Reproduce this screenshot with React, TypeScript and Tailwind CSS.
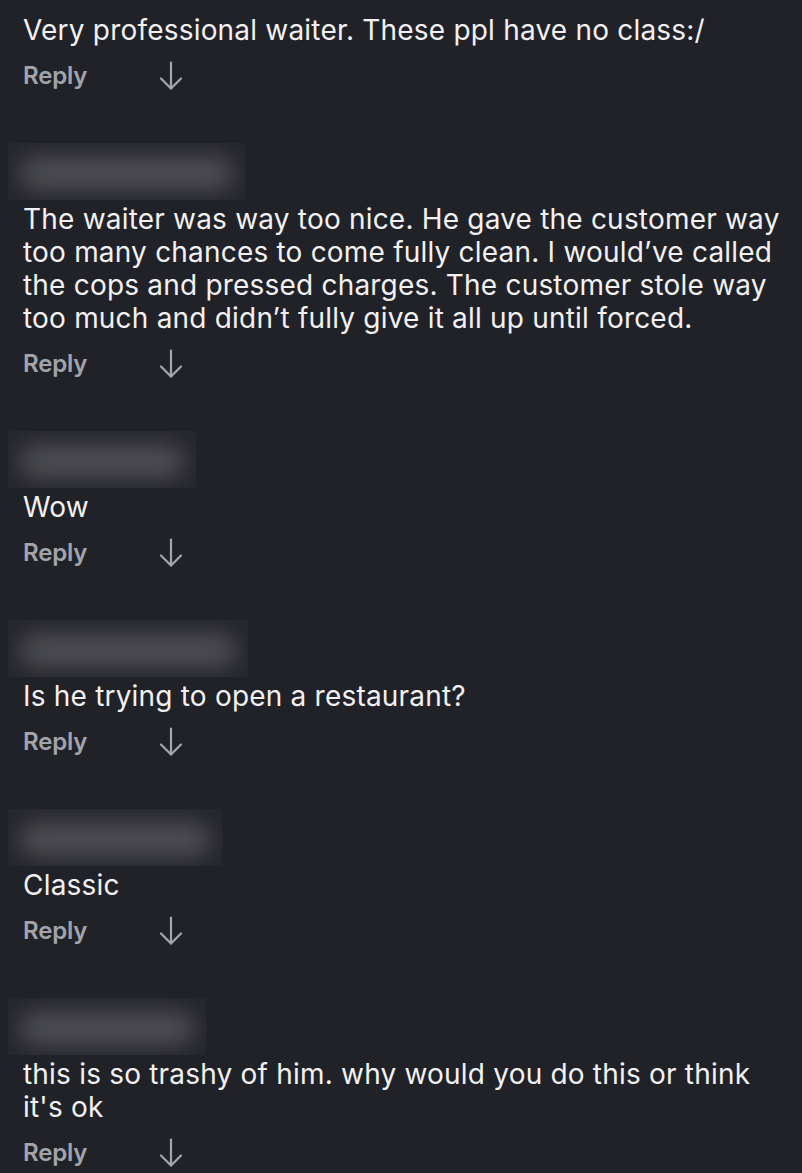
import React from "react";

function Arrow() {
  return (
    <svg width="24" height="30" viewBox="0 0 24 30" fill="none" stroke="#a3a6ae" strokeWidth="2.2" strokeLinecap="round" strokeLinejoin="round">
      <path d="M12 1.5v26" />
      <path d="M2 17.5l10 10 10-10" />
    </svg>
  );
}

function Blob({ w }: { w: number }) {
  return (
    <div className="h-[57px] relative overflow-hidden" style={{ width: w }}>
      <div className="absolute inset-0 bg-[#26272c]" />
      <div className="absolute left-[12px] right-[12px] top-[14px] bottom-[10px] rounded-full bg-[#4d4e53] blur-[11px]" />
    </div>
  );
}

function ReplyRow() {
  return (
    <div className="mt-[8px] h-[41px] flex items-center pl-[23px]">
      <span className="text-[24px] font-semibold text-[#a1a4ac] w-[136px] tracking-[-0.2px]">Reply</span>
      <Arrow />
    </div>
  );
}

function Comment({ blob, children }: { blob?: number; children: React.ReactNode }) {
  return (
    <div className="flex flex-col">
      {blob ? (
        <div className="pl-[8px] mb-[3px]">
          <Blob w={blob} />
        </div>
      ) : null}
      <div className="pl-[23px] text-[28px] leading-[33px] text-[#f1f1f3] tracking-[0.2px]">{children}</div>
      <ReplyRow />
    </div>
  );
}

export default function App() {
  return (
    <div
      className="w-[802px] h-[1173px] overflow-hidden bg-[#212227] pt-[14px] flex flex-col gap-[47px]"
      style={{ fontFamily: "Inter, Roboto, sans-serif" }}
    >
      <Comment>Very professional waiter. These ppl have no class:/</Comment>
      <Comment blob={237}>
        The waiter was way too nice. He gave the customer way
        <br />
        too many chances to come fully clean. I would’ve called
        <br />
        the cops and pressed charges. The customer stole way
        <br />
        too much and didn’t fully give it all up until forced.
      </Comment>
      <Comment blob={188}>Wow</Comment>
      <Comment blob={240}>Is he trying to open a restaurant?</Comment>
      <Comment blob={214}>Classic</Comment>
      <Comment blob={198}>
        this is so trashy of him. why would you do this or think
        <br />
        it's ok
      </Comment>
    </div>
  );
}
